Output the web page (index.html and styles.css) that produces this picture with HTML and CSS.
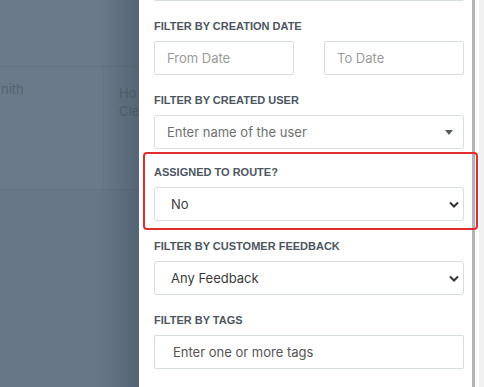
FILE: index.html
```html
<!DOCTYPE html>
<html lang="en">

<head>
    <meta charset="UTF-8">
    <meta name="viewport" content="width=device-width, initial-scale=1.0">
    <title>Filters</title>
    <link rel="stylesheet" href="styles.css">
</head>

<body>
    <div class="page">
        <!-- Dimmed list behind the drawer -->
        <div class="backdrop">
            <div class="row row-top"></div>
            <div class="row row-mid">
                <div class="cell cell-name">nith</div>
                <div class="cell cell-addr">Ho<br>Cle</div>
            </div>
            <div class="row row-low"></div>
            <div class="shade"></div>
        </div>

        <!-- Filter drawer -->
        <aside class="drawer">
            <div class="field field-first">
                <input type="text" class="control" value="">
            </div>

            <div class="field">
                <label class="field-label">Filter by creation date</label>
                <div class="date-pair">
                    <input type="text" class="control" placeholder="From Date">
                    <input type="text" class="control" placeholder="To Date">
                </div>
            </div>

            <div class="field">
                <label class="field-label">Filter by created user</label>
                <div class="control control-select">
                    <span class="muted">Enter name of the user</span>
                    <span class="caret"></span>
                </div>
            </div>

            <div class="field field-marked">
                <label class="field-label">Assigned to route?</label>
                <div class="control control-select">
                    <span class="value">No</span>
                    <svg class="chevron" width="10" height="7" viewBox="0 0 10 7">
                        <path d="M1 1.5 L5 5.5 L9 1.5" fill="none" stroke="#333" stroke-width="2" />
                    </svg>
                </div>
                <div class="highlight"></div>
            </div>

            <div class="field">
                <label class="field-label">Filter by customer feedback</label>
                <div class="control control-select">
                    <span class="value">Any Feedback</span>
                    <svg class="chevron" width="10" height="7" viewBox="0 0 10 7">
                        <path d="M1 1.5 L5 5.5 L9 1.5" fill="none" stroke="#333" stroke-width="2" />
                    </svg>
                </div>
            </div>

            <div class="field">
                <label class="field-label">Filter by tags</label>
                <div class="control control-tags">
                    <span class="tags">Enter one or more tags</span>
                </div>
            </div>
        </aside>

        <div class="scrollbar">
            <div class="scroll-thumb"></div>
            <div class="scroll-gap"></div>
            <div class="scroll-track"></div>
        </div>
    </div>
</body>

</html>
```

FILE: styles.css
```css
/* Basic Reset */
html,
body {
    margin: 0;
    padding: 0;
    height: 100%;
    overflow: hidden;
}

* {
    box-sizing: border-box;
}

.page {
    display: flex;
    height: 387px;
    width: 484px;
    font-family: 'Inter', 'Liberation Sans', sans-serif;
}

/* Backdrop */
.backdrop {
    position: relative;
    width: 139px;
    flex-shrink: 0;
    background: #6b7a8a;
    display: flex;
    flex-direction: column;
}

.row {
    border-bottom: 1px solid #647383;
}

.row-top {
    height: 67px;
}

.row-mid {
    height: 123px;
    display: flex;
}

.row-low {
    flex: 1;
    border-bottom: none;
    background: #687787;
}

.cell {
    font-size: 13px;
    line-height: 18px;
    color: #55626f;
    padding-top: 13px;
    white-space: nowrap;
    overflow: hidden;
}

.cell-name {
    width: 105px;
    border-right: 1px solid #677686;
    padding-left: 1px;
}

.cell-addr {
    padding-left: 15px;
    padding-top: 17px;
}

.shade {
    position: absolute;
    top: 0;
    right: 0;
    bottom: 0;
    width: 40px;
    background: linear-gradient(to right, rgba(60, 75, 90, 0), rgba(60, 75, 90, 0.45));
}

/* Drawer */
.drawer {
    width: 333px;
    flex-shrink: 0;
    background: #ffffff;
    padding: 0 8px 0 15px;
    display: flex;
    flex-direction: column;
    gap: 18px;
}

.field {
    position: relative;
}

.field-first {
    margin-top: -33px;
}

.field-marked {
    margin-top: -2px;
}

.field-label {
    display: block;
    font-family: 'Liberation Sans', Arial, sans-serif;
    font-weight: bold;
    font-size: 11px;
    line-height: 14px;
    text-transform: uppercase;
    color: #4c5661;
    margin-bottom: 8px;
}

.control {
    display: flex;
    align-items: center;
    width: 100%;
    height: 34px;
    border: 1px solid #d6dde1;
    border-radius: 2px;
    background: #ffffff;
    font-family: 'Inter', sans-serif;
    font-size: 13px;
    color: #333333;
    padding: 0 12px;
    outline: none;
}

.control::placeholder {
    color: #9a9a9a;
}

.date-pair {
    display: flex;
    justify-content: space-between;
}

.date-pair .control {
    width: 140px;
}

.control-select {
    justify-content: space-between;
    border-radius: 3px;
}

.muted {
    color: #707070;
}

.caret {
    width: 0;
    height: 0;
    border-left: 4px solid transparent;
    border-right: 4px solid transparent;
    border-top: 5px solid #555b61;
    margin-right: -2px;
}

.value {
    padding-left: 4px;
    color: #3a3a3a;
}

.chevron {
    margin-right: -8px;
}

.control-tags {
    border-radius: 2px;
}

.tags {
    padding-left: 6px;
    color: #555555;
}

/* Red highlight around the route filter */
.highlight {
    position: absolute;
    left: -11px;
    right: -14px;
    top: -13px;
    bottom: -9px;
    border: 2px solid #e12c2c;
    border-radius: 4px;
    pointer-events: none;
}

/* Scrollbar strip */
.scrollbar {
    flex: 1;
    display: flex;
}

.scroll-thumb {
    width: 3px;
    background: #b3b3b3;
}

.scroll-gap {
    width: 4px;
    background: #ffffff;
}

.scroll-track {
    flex: 1;
    background: #f1f1f1;
}
```
